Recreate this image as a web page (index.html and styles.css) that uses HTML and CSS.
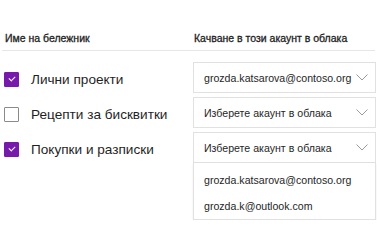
FILE: index.html
```html
<!DOCTYPE html>
<html>
<head>
    <meta charset="utf-8">
    <link rel="stylesheet" href="styles.css">
</head>
<body>
<div class="panel">
    <div class="head">
        <span class="col-name">Име на бележник</span>
        <span class="col-account">Качване в този акаунт в облака</span>
    </div>
    <div class="rows">
        <div class="row">
            <label class="note"><span class="check on"></span>Лични проекти</label>
            <div class="select"><span>grozda.katsarova@contoso.org</span>
                <svg class="chev" width="12" height="7" viewBox="0 0 12 7"><polyline points="0.5,0.5 6,6 11.5,0.5"/></svg></div>
        </div>
        <div class="row">
            <label class="note"><span class="check"></span>Рецепти за бисквитки</label>
            <div class="select"><span>Изберете акаунт в облака</span>
                <svg class="chev" width="12" height="7" viewBox="0 0 12 7"><polyline points="0.5,0.5 6,6 11.5,0.5"/></svg></div>
        </div>
        <div class="row">
            <label class="note"><span class="check on"></span>Покупки и разписки</label>
            <div class="dropdown">
                <div class="select"><span>Изберете акаунт в облака</span>
                    <svg class="chev" width="12" height="7" viewBox="0 0 12 7"><polyline points="0.5,0.5 6,6 11.5,0.5"/></svg></div>
                <ul class="menu">
                    <li>grozda.katsarova@contoso.org</li>
                    <li>grozda.k@outlook.com</li>
                </ul>
            </div>
        </div>
    </div>
</div>
</body>
</html>
```

FILE: styles.css
```css
body {
    margin: 0;
    background: #fff;
    color: #222;
    font-family: "Liberation Sans", Arial, sans-serif;
}

.panel {
    padding-top: 32px;
}

.head {
    display: grid;
    grid-template-columns: 189px 1fr;
    padding: 0 0 0 3px;
    height: 18px;
    font-size: 10.5px;
    color: #1e1e1e;
    -webkit-text-stroke: 0.3px #1e1e1e;
    border-bottom: 1px solid #e6e6e6;
    margin: 0 2px;
}

.rows {
    padding-top: 11px;
}

.row {
    display: grid;
    grid-template-columns: 193px 1fr;
    align-items: start;
}

.row + .row {
    margin-top: 4px;
}

.note {
    display: flex;
    align-items: center;
    height: 31px;
    padding: 3px 0 0 4px;
    box-sizing: border-box;
    font-size: 13.6px;
    color: #1f1f1f;
}

.check {
    width: 15px;
    height: 15px;
    box-sizing: border-box;
    border: 1px solid #8a8a8a;
    border-radius: 1px;
    margin-right: 12px;
    position: relative;
}

.check.on {
    background: #7719aa;
    border-color: #7719aa;
}

.check.on::after {
    content: "";
    position: absolute;
    left: 4px;
    top: 3px;
    width: 5px;
    height: 3px;
    border-left: 1.5px solid #fff;
    border-bottom: 1.5px solid #fff;
    transform: rotate(-45deg);
}

.select {
    display: flex;
    align-items: center;
    justify-content: space-between;
    height: 31px;
    box-sizing: border-box;
    border: 1px solid #e1e1e1;
    padding: 0 7px 0 10px;
    margin-right: 1px;
    font-size: 10.6px;
    color: #262626;
}

.chev {
    fill: none;
    stroke: #9a9a9a;
    stroke-width: 1;
}

.menu {
    list-style: none;
    margin: 0 1px 0 0;
    padding: 4px 0 0;
    border: 1px solid #e1e1e1;
    border-top: 0;
    box-shadow: 0 1px 2px rgba(0, 0, 0, 0.08);
}

.menu li {
    height: 26px;
    line-height: 26px;
    padding-left: 10px;
    font-size: 10.6px;
    color: #262626;
}
```
